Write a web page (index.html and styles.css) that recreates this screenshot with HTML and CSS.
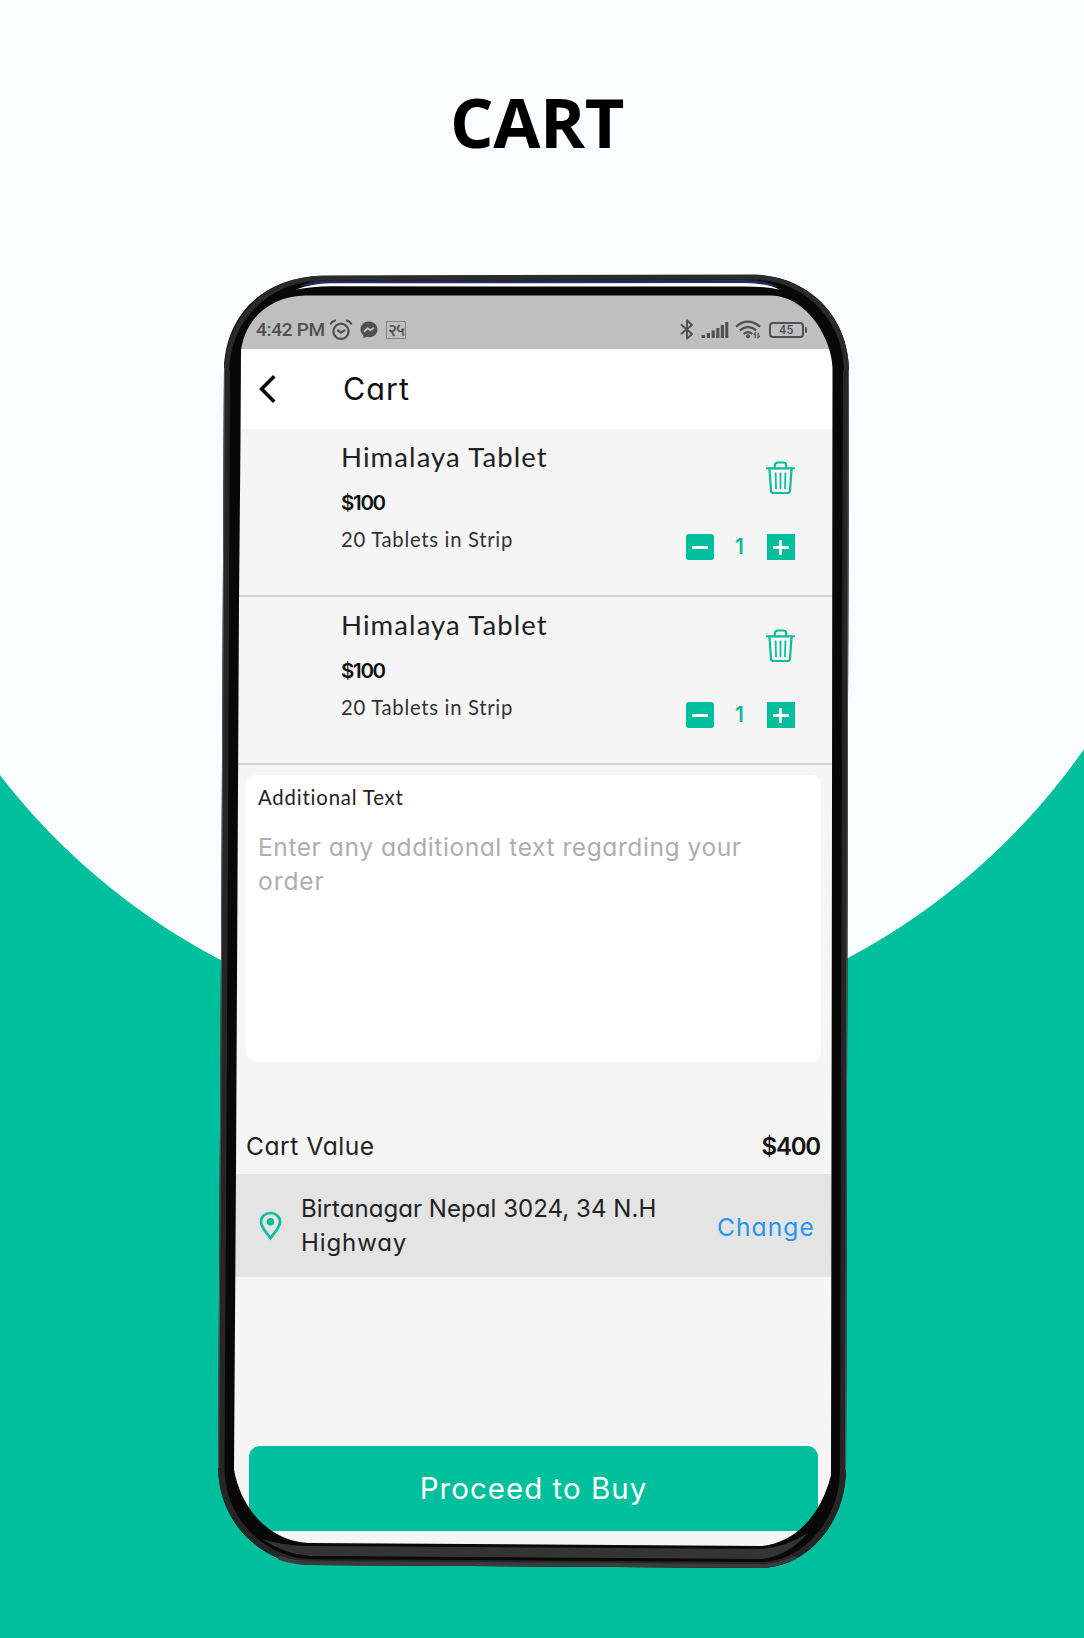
FILE: index.html
```html
<!DOCTYPE html>
<html lang="en">
<head>
<meta charset="utf-8">
<title>Cart</title>
<link rel="stylesheet" href="styles.css">
</head>
<body>
<svg class="defs" width="0" height="0" aria-hidden="true">
  <symbol id="trash" viewBox="0 0 29 34">
    <g fill="none" stroke="#0cbd9b" stroke-width="2.2" stroke-linecap="round" stroke-linejoin="round">
      <path d="M1 7.3H28M3.4 7.5L5 29.6Q5.2 32 7.4 32H21.6Q23.8 32 24 29.6L25.6 7.5M8.8 7V4.6Q8.800 1.500 12 1.500H17.200Q20.200 1.500 20.200 4.600V7"/>
      <path stroke-width="1.700" d="M9.600 12L10 27.500M14.500 12V27.500M19.400 12L19 27.500"/>
    </g>
  </symbol>
</svg>
<main class="page">
  <h1 class="title">CART</h1>
  <section class="phone">
    <div class="screen">
      <div class="status">
        <span class="time">4:42 PM</span>
        <svg class="alarm" width="24" height="22" viewBox="0 0 24 22" fill="none" stroke="#505050" stroke-width="2.200" stroke-linecap="round"><circle cx="12" cy="12.300" r="7.600"/><path d="M9 11.500l3 2.200 3.400-2.400M1.800 4.600Q3.400 2.300 6 1.500M22.200 4.600Q20.600 2.300 18 1.500"/></svg>
        <svg class="messenger" width="18" height="18" viewBox="0 0 18 18"><path fill="#505050" d="M9 .5C4 .5.500 4 .500 8.500c0 2.500 1.100 4.500 2.900 5.900v2.800l2.700-1.400c.9.200 1.900.4 2.900.4 5 0 8.500-3.400 8.500-7.700S14 .500 9 .500z"/><path d="M4 10.700l3.600-3.500 2.700 2 3.600-2.400" fill="none" stroke="#bfbfbf" stroke-width="1.900"/></svg>
        <span class="badge">२५</span>
        <span class="spacer"></span>
        <svg class="bt" width="14" height="21" viewBox="0 0 14 21" fill="none" stroke="#505050" stroke-width="1.900" stroke-linejoin="round"><path d="M1 5.500L12 15l-5 4.500V1.200L12 6 1 15"/></svg>
        <svg class="signal" width="28" height="18" viewBox="0 0 28 18" fill="#505050"><path d="M.500 14h3.500v3H.500zM5.800 12h3.200v5H5.800zM10.600 9.500h3.200V17h-3.200zM15.200 7h3.200v10h-3.200zM19.800 4H23v13h-3.200zM24.200 1h3.100v16h-3.100z"/></svg>
        <svg class="wifi" width="27" height="19" viewBox="0 0 27 19"><g fill="none" stroke="#505050" stroke-width="2.200"><path d="M1 6.600Q12.800-3.400 25 6.600M4.800 10.400Q13 3.600 21.200 10.400M8.600 14Q13 10.200 17.400 14"/></g><circle cx="13" cy="16.200" r="2" fill="#505050"/><path d="M20.200 18v-5l-1.500 1.500M23.200 12.500v5l1.500-1.500" fill="none" stroke="#505050" stroke-width="1.300"/></svg>
        <span class="battery">45</span>
      </div>
      <header class="bar">
        <svg width="18" height="28" viewBox="0 0 18 28" fill="none" stroke="#050505" stroke-width="3.600" stroke-linecap="square"><path d="M14 2.600L2.600 14 14 25.400"/></svg>
        <span class="bar-title">Cart</span>
      </header>

      <article class="item">
        <div class="info">
          <div class="name">Himalaya Tablet</div>
          <div class="price">$100</div>
          <div class="detail">20 Tablets in Strip</div>
        </div>
        <div class="actions">
          <svg class="trash" width="29" height="34"><use href="#trash"/></svg>
          <div class="stepper"><span class="btn minus"></span><span class="qty">1</span><span class="btn plus"></span></div>
        </div>
      </article>
      <article class="item">
        <div class="info">
          <div class="name">Himalaya Tablet</div>
          <div class="price">$100</div>
          <div class="detail">20 Tablets in Strip</div>
        </div>
        <div class="actions">
          <svg class="trash" width="29" height="34"><use href="#trash"/></svg>
          <div class="stepper"><span class="btn minus"></span><span class="qty">1</span><span class="btn plus"></span></div>
        </div>
      </article>

      <div class="note">
        <div class="label">Additional Text</div>
        <div class="placeholder">Enter any additional text regarding your<br><span class="wide">order</span></div>
      </div>
      <div class="total"><span class="total-label">Cart Value</span><span class="sum">$400</span></div>
      <div class="address">
        <svg width="23" height="30" viewBox="0 0 23 30"><path d="M11.500 27.200C8 22.500 2 16.500 2 10.800 2 5.500 6.200 2 11.500 2S21 5.500 21 10.800C21 16.500 15 22.500 11.500 27.200z" fill="none" stroke="#0cbd9b" stroke-width="2.700"/><circle cx="11.500" cy="10.800" r="3.800" fill="#0cbd9b"/></svg>
        <div class="place">Birtanagar Nepal 3024, 34 N.H<br><span class="wide">Highway</span></div>
        <span class="change">Change</span>
      </div>
      <div class="buy">Proceed to Buy</div>
    </div>
    <svg class="frame" width="640" height="1300" viewBox="214 272 640 1300" aria-hidden="true">
      <path fill="#080808" fill-rule="evenodd" d="M224 368C226 316 262 277 322 276L755 275C810 277 848 316 849 370L848 700L846 1470C845 1524 808 1566 762 1568L310 1565C259 1562 219 1522 218 1468L221 960Z M241 350C246 318 270 296 306 295.500L772 295.500C808 297 832 340 832.500 368L832 800L831 1475C822 1512 798 1542 762 1546L308 1543C264 1540 240 1503 234 1470L236 1170L239 600L240.500 440Z"/>
      <path fill="none" stroke="#2b2b2b" stroke-width="5" d="M226.500 370C229 320 264 280 322 278L755 277C807 279 845 318 846.500 370"/>
      <path fill="none" stroke="#262626" stroke-width="6" d="M227 370L224.500 960L221.500 1468C222 1520 262 1560 310 1562L762 1565C806 1563 842 1522 843 1470L845 700L846 370"/>
      <path fill="#343434" d="M262 1539Q284 1546 308 1546L762 1549Q786 1547 808 1533Q788 1556 762 1559L310 1556Q284 1554 262 1539Z"/>
      <path fill="none" stroke="#3b3b3b" stroke-width="4" stroke-linecap="round" d="M280 1558Q295 1563 310 1563L762 1566Q780 1565 794 1558"/>
      <path fill="none" stroke="#555" stroke-width="1" d="M224.500 368L221.500 960L218.500 1468M848.500 370L847.500 700L845.500 1470"/>
      <path fill="#252b62" d="M300 286Q312 280 330 280.500L745 280Q764 280 778 287L745 284H330Z"/>
      <path fill="#fff" d="M296 289.500Q312 283.500 330 283.300L745 283Q768 283.500 779 289.500Q765 286.500 745 286.500L330 286.300Q312 286.500 296 289.500Z"/>
    </svg>
  </section>
</main>
</body>
</html>
```
FILE: styles.css
```css
body {
  margin: 0;
}

.defs {
  position: absolute;
}

.page {
  box-sizing: border-box;
  width: 1084px;
  height: 1638px;
  overflow: hidden;
  display: flow-root;
  background: radial-gradient(circle at 532.4px 363.5px, #fbfcfe 672.5px, #00bf9d 673.5px);
}

.title {
  margin: 82px 0 0 450px;
  height: 80px;
  font: 700 68.5px/80px "Open Sans", sans-serif;
  letter-spacing: -0.5px;
  color: #000;
}

.phone {
  position: relative;
  width: 640px;
  height: 1300px;
  margin: 110px 0 0 214px;
}

.frame {
  position: absolute;
  left: 0;
  top: 0;
}

.screen {
  box-sizing: border-box;
  position: relative;
  display: flow-root;
  width: 600px;
  height: 1252px;
  margin-left: 20px;
  top: 23px;
  overflow: hidden;
  border-radius: 45px;
  background: #f5f5f5;
  font-family: Inter, sans-serif;
  font-feature-settings: "cv11";
  color: #222;
}

.status {
  box-sizing: border-box;
  display: flex;
  align-items: center;
  height: 54px;
  padding: 15px 28px 0 22px;
  background: #bfbfbf;
  color: #505050;
}

.time {
  width: 73px;
  font: 500 19px/20px Roboto, sans-serif;
  letter-spacing: -0.3px;
  white-space: nowrap;
}

.messenger {
  margin-left: 7px;
}

.badge {
  box-sizing: border-box;
  width: 20px;
  height: 18px;
  margin-left: 8px;
  border: 1px solid #858585;
  font: 500 17px/15px "Noto Sans", sans-serif;
  letter-spacing: -1px;
  text-align: center;
}

.spacer {
  flex: 1;
}

.signal {
  margin-left: 7px;
}

.wifi {
  margin-left: 6px;
}

.battery {
  position: relative;
  box-sizing: border-box;
  width: 35px;
  height: 16px;
  margin-left: 7px;
  margin-right: 2px;
  border: 2px solid #505050;
  border-radius: 4px;
  font: 500 12px/12.5px Roboto, sans-serif;
  letter-spacing: 0.5px;
  text-align: center;
}

.battery::after {
  content: "";
  position: absolute;
  right: -5px;
  top: 3px;
  width: 2px;
  height: 6px;
  border-radius: 1px;
  background: #505050;
}

.bar {
  display: flex;
  align-items: center;
  height: 80px;
  padding-left: 25px;
  background: #fff;
}

.bar-title {
  margin-left: 66px;
  font-size: 30.5px;
  letter-spacing: 1px;
  line-height: 40px;
  margin-bottom: 1px;
  color: #111;
}

.item {
  box-sizing: border-box;
  display: flex;
  justify-content: space-between;
  height: 168px;
  padding: 8px 39px 0 107px;
  border-bottom: 2px solid #d2d2d2;
}

.name {
  font: 27.5px/40px Lato, sans-serif;
  letter-spacing: 1.1px;
}

.price {
  margin-top: 11px;
  font-size: 20.5px;
  font-weight: 600;
  line-height: 30px;
  letter-spacing: -1.3px;
  color: #111;
}

.detail {
  margin-top: 6px;
  font: 20.3px/30px Lato, sans-serif;
  letter-spacing: 0.7px;
  color: #333;
}

.actions {
  display: flex;
  flex-direction: column;
  align-items: flex-end;
}

.trash {
  margin-top: 24px;
}

.stepper {
  display: flex;
  align-items: center;
  justify-content: space-between;
  width: 109px;
  margin-top: 39px;
}

.btn {
  width: 28px;
  height: 26px;
  background:
    linear-gradient(#fff, #fff) center / 16px 3px no-repeat,
    #00bf9d;
}

.minus {
  border-radius: 3px;
}

.plus {
  background:
    linear-gradient(#fff, #fff) center / 16px 3px no-repeat,
    linear-gradient(#fff, #fff) center / 3px 15px no-repeat,
    #00bf9d;
}

.qty {
  margin-right: 2px;
  font-size: 21px;
  font-weight: 600;
  line-height: 26px;
  color: #0cbd9b;
}

.note {
  box-sizing: border-box;
  width: 575px;
  height: 287px;
  margin: 10px 0 0 12px;
  padding: 7px 12px;
  border-radius: 11px;
  background: #fff;
}

.label {
  font: 20.3px/30px Lato, sans-serif;
  letter-spacing: 0.85px;
  font-variant-ligatures: none;
}

.placeholder {
  margin-top: 18px;
  font-size: 24.6px;
  line-height: 34.3px;
  letter-spacing: 0.54px;
  white-space: nowrap;
  color: #aeaeae;
}

.wide {
  letter-spacing: 0.9px;
}

.total {
  display: flex;
  justify-content: space-between;
  align-items: center;
  height: 56px;
  margin-top: 56px;
  padding: 0 14px 0 12px;
  font-size: 24.6px;
}

.total-label {
  letter-spacing: 0.55px;
}

.sum {
  font-size: 24px;
  font-weight: 600;
  letter-spacing: -1.2px;
  color: #111;
}

.address {
  box-sizing: border-box;
  display: flex;
  align-items: center;
  height: 103px;
  padding: 1px 19px 0 25px;
  background: #e4e4e4;
  font-size: 24px;
  line-height: 34.3px;
}

.place {
  flex: 1;
  margin-left: 19px;
  letter-spacing: 0.05px;
  white-space: nowrap;
}

.change {
  margin-top: 2px;
  font-size: 24.6px;
  letter-spacing: 1.1px;
  color: #2796ee;
}

.buy {
  width: 569px;
  height: 85px;
  margin: 169px 0 0 15px;
  border-radius: 11px;
  background: #00bf9d;
  color: #fff;
  font-size: 29.5px;
  line-height: 85px;
  letter-spacing: 1px;
  text-align: center;
}
```
